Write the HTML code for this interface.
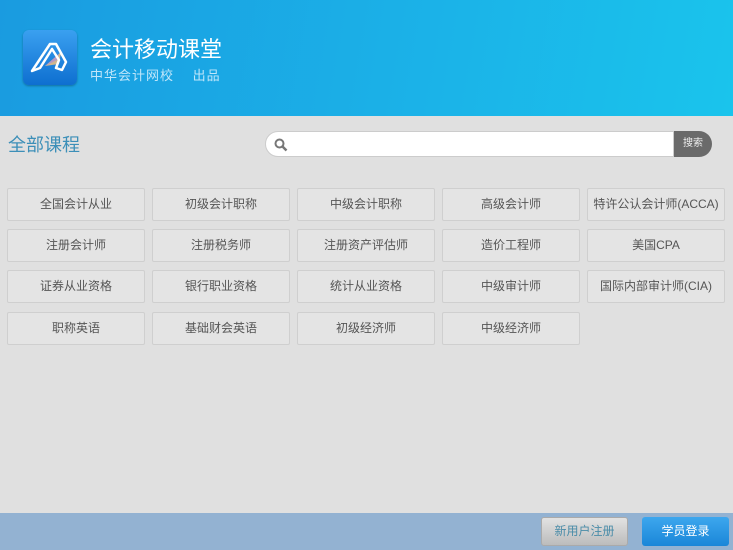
<!DOCTYPE html>
<html><head><meta charset="utf-8"><style>
*{margin:0;padding:0;box-sizing:border-box}
body{width:733px;height:550px;overflow:hidden;background:#e0e0e0;font-family:"Liberation Sans","Noto Sans CJK SC",sans-serif;position:relative}
.hd{position:absolute;left:0;top:0;width:733px;height:116px;background:linear-gradient(100deg,#1a9be0 0%,#1bb3e8 60%,#1ac4ec 100%)}
.logo{position:absolute;left:23px;top:30px;width:54px;height:55px;border-radius:6px;background:linear-gradient(#3aa0f0,#0e6fd0);box-shadow:0 1px 2px rgba(0,0,0,.3)}
.t1{position:absolute;left:90px;top:32px;color:#fff;font-size:22px}
.t2{position:absolute;left:90px;top:65px;color:#bfe6fa;font-size:13px;letter-spacing:1px}
.all{position:absolute;left:8px;top:131px;color:#3c8fb8;font-size:18px}
.sb{position:absolute;left:265px;top:131px;width:409px;height:26px;background:#fff;border:1px solid #ccc;border-radius:13px 0 0 13px}
.sbt{position:absolute;left:674px;top:131px;width:38px;height:26px;background:#6a6a6a;border-radius:0 13px 13px 0;color:#eee;font-size:10px;text-align:center;line-height:26px}
.b{position:absolute;width:138px;height:33px;background:#e4e4e4;border:1px solid #cfcfcf;border-radius:2px;color:#555;font-size:12px;text-align:center;line-height:31px}
.ft{position:absolute;left:0;top:513px;width:733px;height:37px;background:#93b2d2}
.r{position:absolute;left:541px;top:517px;width:87px;height:29px;border-radius:3px;background:linear-gradient(#e2e2e2,#bcbcbc);border:1px solid #aaa;color:#4a8ca8;font-size:12px;text-align:center;line-height:27px}
.l{position:absolute;left:642px;top:517px;width:87px;height:29px;border-radius:3px;background:linear-gradient(#3da7ee,#1a86d8);color:#fff;font-size:12px;text-align:center;line-height:29px}
</style></head><body>
<div class="hd"></div>
<div class="logo"><svg width="54" height="55" viewBox="0 0 54 55"><path d="M22 36 L36 34 L38 22 Z" fill="#f0c080" opacity=".85"/><path d="M22 36 L34 30 L36 24 Z" fill="#b090d0" opacity=".8"/><path d="M9 41 L27 14 L33 14 L43 32 L39 40 L33 38 L36 30 L29 19 L17 38 Z" fill="none" stroke="#fff" stroke-width="2.5" stroke-linejoin="round"/></svg></div>
<div class="t1">会计移动课堂</div>
<div class="t2">中华会计网校　 出品</div>
<div class="all">全部课程</div>
<div class="sb"><svg style="position:absolute;left:8px;top:6px" width="14" height="14" viewBox="0 0 14 14"><circle cx="5.5" cy="5.5" r="4" fill="none" stroke="#777" stroke-width="2"/><path d="M8.5 8.5 L12.5 12.5" stroke="#777" stroke-width="2.5"/></svg></div>
<div class="sbt">搜索</div>
<div class="b" style="left:7px;top:188px">全国会计从业</div>
<div class="b" style="left:152px;top:188px">初级会计职称</div>
<div class="b" style="left:297px;top:188px">中级会计职称</div>
<div class="b" style="left:442px;top:188px">高级会计师</div>
<div class="b" style="left:587px;top:188px">特许公认会计师(ACCA)</div>
<div class="b" style="left:7px;top:229px">注册会计师</div>
<div class="b" style="left:152px;top:229px">注册税务师</div>
<div class="b" style="left:297px;top:229px">注册资产评估师</div>
<div class="b" style="left:442px;top:229px">造价工程师</div>
<div class="b" style="left:587px;top:229px">美国CPA</div>
<div class="b" style="left:7px;top:270px">证券从业资格</div>
<div class="b" style="left:152px;top:270px">银行职业资格</div>
<div class="b" style="left:297px;top:270px">统计从业资格</div>
<div class="b" style="left:442px;top:270px">中级审计师</div>
<div class="b" style="left:587px;top:270px">国际内部审计师(CIA)</div>
<div class="b" style="left:7px;top:312px">职称英语</div>
<div class="b" style="left:152px;top:312px">基础财会英语</div>
<div class="b" style="left:297px;top:312px">初级经济师</div>
<div class="b" style="left:442px;top:312px">中级经济师</div>
<div class="ft"></div>
<div class="r">新用户注册</div>
<div class="l">学员登录</div>
</body></html>
